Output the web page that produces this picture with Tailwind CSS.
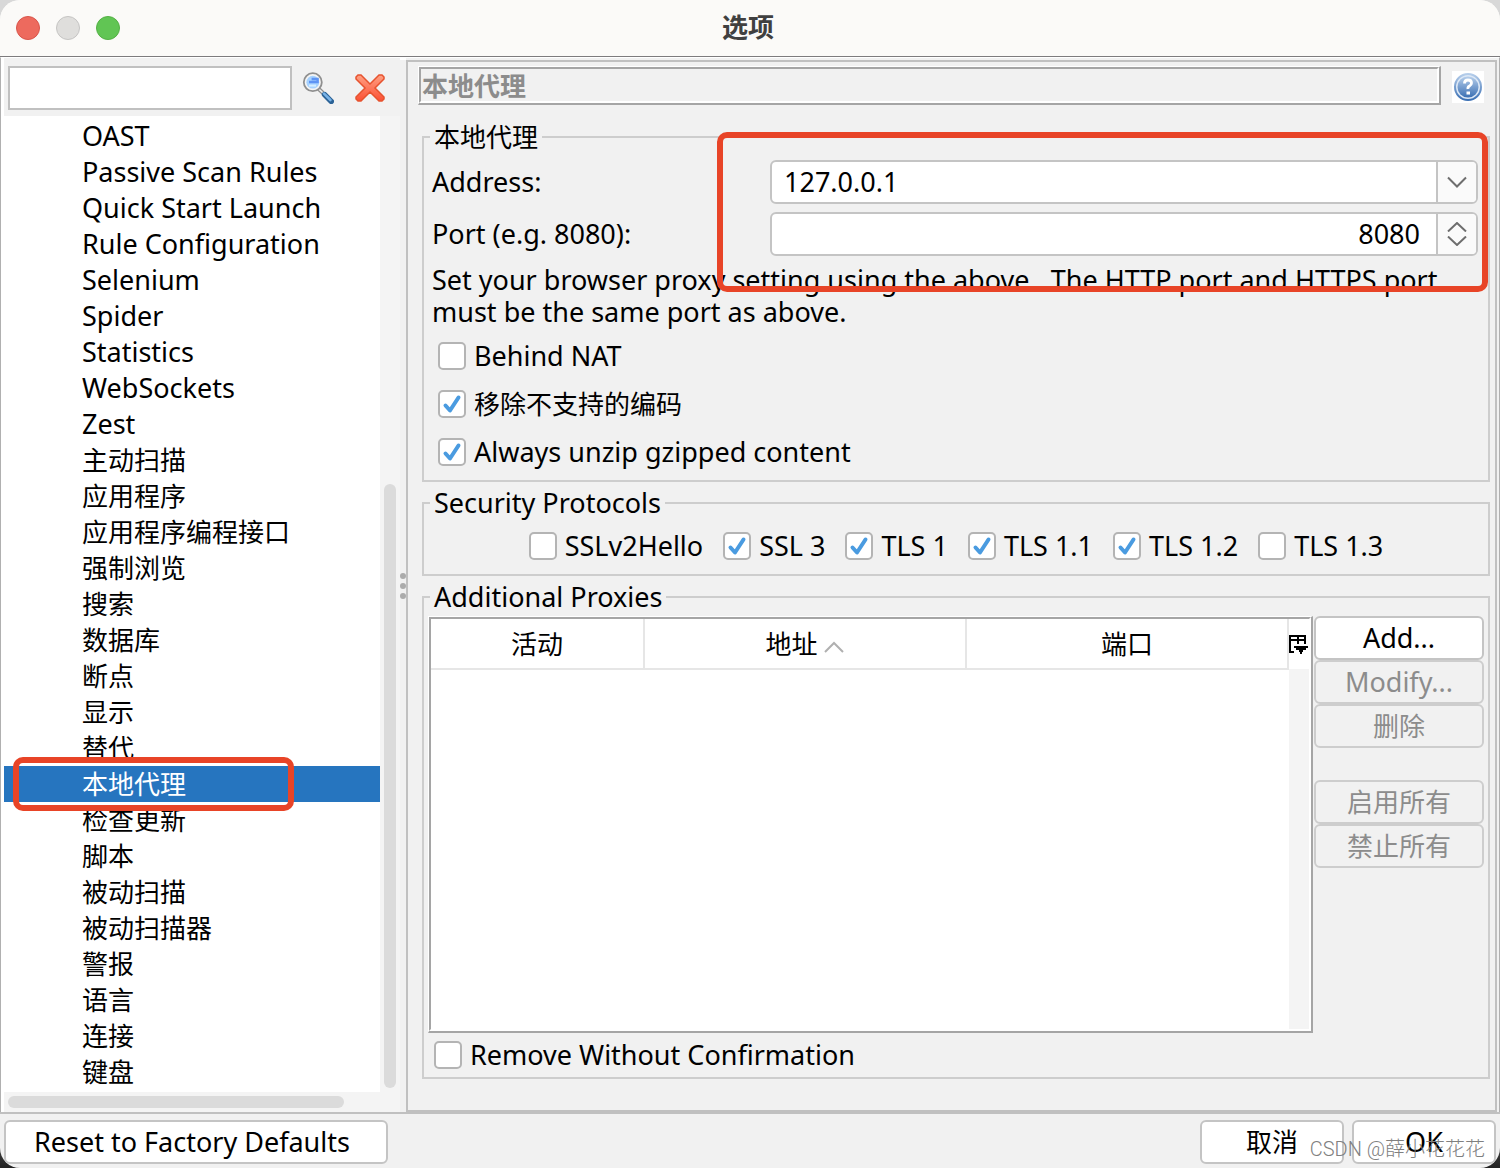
<!DOCTYPE html>
<html lang="zh-CN">
<head>
  <meta charset="UTF-8" />
  <meta name="viewport" content="width=device-width, initial-scale=1.0" />
  <title>选项</title>
  <script src="https://cdn.jsdelivr.net/npm/@tailwindcss/browser@4"></script>
</head>
<body class="bg-linear-to-b from-[#d8d8d8] from-90% to-[#222222] font-['Noto_Sans','Noto_Sans_CJK_SC',sans-serif] text-[27px] leading-8 text-black">
  <div class="relative flex min-h-screen flex-col overflow-hidden rounded-[20px] bg-[#f1f1f1]">

    <!-- Title bar -->
    <header class="relative flex h-[57px] items-center justify-center border-b border-[#7d7b7d] bg-[#fbfaf8] pb-0.5 pr-1">
      <div class="absolute left-4 top-4 flex gap-4">
        <button aria-label="关闭" class="size-6 rounded-full border border-[#d8554b] bg-[#ed6a5e]"></button>
        <button aria-label="最小化" class="size-6 rounded-full border border-[#c5c4c3] bg-[#dfdedc]"></button>
        <button aria-label="缩放" class="size-6 rounded-full border border-[#54b045] bg-[#61c554]"></button>
      </div>
      <h1 class="text-[26px] font-bold text-[#404040]">选项</h1>
    </header>

    <main class="flex flex-1 border-x border-t border-x-[#b0b0b0] border-t-white">
      <!-- Sidebar -->
      <aside class="flex w-[399px] shrink-0 flex-col border-l-3 border-white">
        <form class="flex h-[58px] items-center pl-1 pt-0.5" onsubmit="return false">
          <input id="search" type="text" aria-label="搜索" class="h-11 w-[284px] border-2 border-[#c0c0c0] bg-white px-2 outline-none" />
          <button aria-label="查找" class="ml-2.5 size-8">
            <svg viewBox="0 0 16 16" class="size-8">
              <path d="M8.400 8.500 L10.500 10.500" stroke="#8f8f8f" stroke-width="2" />
              <path d="M8.400 8.500 L10.500 10.500" stroke="#eeeeee" stroke-width="0.800" />
              <path d="M11.300 11.300 L14.600 14.700" stroke="#2b6296" stroke-width="2.800" stroke-linecap="round" />
              <path d="M11 10.800 L14.200 14" stroke="#78b2e6" stroke-width="1.300" stroke-linecap="round" />
              <circle cx="5.400" cy="5.100" r="4.500" fill="#f4f4f4" stroke="#8f8f8f" stroke-width="0.900" />
              <circle cx="5.400" cy="5.100" r="3.200" fill="#a6d2ff" />
              <path d="M3.500 5h4.300v-1.500h-3" fill="none" stroke="#5e94f4" stroke-width="1.200" />
              <path d="M3.500 6.800h3.500" stroke="#d5eeff" stroke-width="1" />
            </svg>
          </button>
          <button type="reset" aria-label="清除" class="ml-5 size-8">
            <svg viewBox="0 0 32 32" class="size-8">
              <defs>
                <linearGradient id="redX" x1="0" y1="0" x2="0" y2="1">
                  <stop offset="0" stop-color="#ffa083" />
                  <stop offset="1" stop-color="#fb5034" />
                </linearGradient>
              </defs>
              <path d="M4 3h3l9 9 9-9h3l2 2v2l-9 9 9 9v2l-2 2h-3l-9-9-9 9H4l-2-2v-2l9-9-9-9V5z" fill="url(#redX)" stroke="#e6532f" stroke-width="1.500" />
            </svg>
          </button>
        </form>
        <div class="flex flex-1">
          <ul id="menu" class="flex-1 bg-white py-0.5"></ul>
          <div class="flex w-5 flex-col bg-[#f4f4f4] px-1 pb-1">
            <div class="mt-auto h-[604px] rounded-full bg-[#dbdbdb]"></div>
          </div>
        </div>
        <div class="h-5 bg-[#f4f4f4] px-1 py-1">
          <div class="h-3 w-[336px] rounded-full bg-[#dbdbdb]"></div>
        </div>
      </aside>

      <!-- Split handle -->
      <div class="flex w-1.5 flex-col items-center justify-center gap-1 border-t-2 border-white">
        <span class="size-1.5 rounded-full bg-[#ababab]"></span>
        <span class="size-1.5 rounded-full bg-[#ababab]"></span>
        <span class="size-1.5 rounded-full bg-[#ababab]"></span>
      </div>

      <!-- Content panel -->
      <section class="mr-0.5 mt-0.5 flex min-w-0 flex-1 flex-col border-2 border-[#c0c0c0] pb-7">
        <div class="flex items-center gap-[11px] py-1 pl-2.5 pr-[11px]">
          <div class="flex-1 border-b-2 border-l border-r-2 border-t border-b-[#a5a5a5] border-l-white border-r-[#a5a5a5] border-t-white">
            <h2 class="h-9 border-2 border-b-white border-l-[#a5a5a5] border-r-white border-t-[#a5a5a5] pl-px text-[26px] font-bold leading-[34px] text-[#8c8c8c]">本地代理</h2>
          </div>
          <button aria-label="帮助" class="mt-0.5 size-8 bg-white">
            <svg viewBox="0 0 32 32" class="size-8">
              <defs>
                <linearGradient id="helpBlue" x1="0" y1="0" x2="0" y2="1">
                  <stop offset="0" stop-color="#b5cdea" />
                  <stop offset="1" stop-color="#3b70b4" />
                </linearGradient>
              </defs>
              <circle cx="16" cy="16" r="13" fill="#dbe7f5" stroke="url(#helpBlue)" stroke-width="2" />
              <circle cx="16" cy="16" r="10.500" fill="url(#helpBlue)" />
              <path d="M12.500 12.500q0-3.500 3.500-3.500t3.500 3q0 2-2 3t-1.500 3" fill="none" stroke="#fff" stroke-width="2.800" />
              <path d="M14.500 20.500h3.500v3h-3.500z" fill="#fff" />
            </svg>
          </button>
        </div>

        <div class="flex flex-1 flex-col gap-1.5 pl-3.5 pr-[5px] pt-[13px]">
          <fieldset class="relative min-w-0 border-2 border-[#cdcdcd] pb-1">
            <legend class="ml-1.5 h-[30px] px-1 text-[26px] leading-[30px]">本地代理</legend>
            <div class="mt-2 flex items-center pl-2 pr-2.5">
              <label for="address" class="w-[338px] shrink-0">Address:</label>
              <div class="relative h-11 flex-1">
                <select id="address" class="size-full appearance-none rounded-md border-2 border-[#c4c4c4] bg-white pl-3 outline-none">
                  <option>127.0.0.1</option>
                </select>
                <span class="pointer-events-none absolute inset-y-0.5 right-0.5 flex w-10 items-center justify-center rounded-r border-l-2 border-[#c4c4c4] bg-[#fafafa]">
                  <svg viewBox="0 0 20 12" class="h-3 w-5" fill="none" stroke="#6e6e6e" stroke-width="2"><path d="M1 1.500l9 9 9-9" /></svg>
                </span>
              </div>
            </div>
            <div class="mt-2 flex items-center pl-2 pr-2.5">
              <label for="port" class="w-[338px] shrink-0">Port (e.g. 8080):</label>
              <div class="flex h-11 flex-1 overflow-hidden rounded-md border-2 border-[#c4c4c4] bg-white">
                <input id="port" type="text" inputmode="numeric" value="8080" class="min-w-0 flex-1 pr-4 text-right outline-none" />
                <div class="flex w-10 flex-col items-center justify-center gap-1 border-l-2 border-[#c4c4c4] bg-[#fafafa]">
                  <button aria-label="增加" onclick="stepPort(1)" class="h-2.5 w-5">
                    <svg viewBox="0 0 20 10" class="h-2.5 w-5" fill="none" stroke="#6e6e6e" stroke-width="2"><path d="M1 9.500l9-8.500 9 8.500" /></svg>
                  </button>
                  <button aria-label="减少" onclick="stepPort(-1)" class="h-2.5 w-5">
                    <svg viewBox="0 0 20 10" class="h-2.5 w-5" fill="none" stroke="#6e6e6e" stroke-width="2"><path d="M1 0.500l9 8.500 9-8.500" /></svg>
                  </button>
                </div>
              </div>
            </div>
            <p class="mt-2 pl-2 pr-8">Set your browser proxy setting using the above.&nbsp; The HTTP port and HTTPS port must be the same port as above.</p>
            <div id="options" class="mt-1 flex flex-col pl-3.5"></div>
            <!-- Highlight around the address and port fields -->
            <div class="pointer-events-none absolute right-0 -top-5 left-[293px] h-[160px] rounded-[10px] border-6 border-[#e84427]"></div>
          </fieldset>

          <fieldset class="min-w-0 border-2 border-[#cdcdcd]">
            <legend class="ml-1.5 h-[30px] px-1 leading-[30px]">Security Protocols</legend>
            <div id="protocols" class="flex h-14 items-center justify-center gap-5"></div>
          </fieldset>

          <fieldset class="min-w-0 border-2 border-[#cdcdcd]">
            <legend class="ml-1.5 h-[30px] px-1 leading-[30px]">Additional Proxies</legend>
            <div class="mt-1 flex gap-px px-1">
              <div class="flex-1 border-b-2 border-l border-r-2 border-t border-b-[#a5a5a5] border-l-white border-r-[#a5a5a5] border-t-white">
                <div class="flex h-[414px] border-2 border-b-white border-l-[#a5a5a5] border-r-white border-t-[#a5a5a5]">
                  <div class="flex-1 bg-white">
                    <table class="w-full table-fixed border-collapse text-[26px]">
                      <thead>
                        <tr class="h-[50px]">
                          <th class="w-[213px] border-b-2 border-r-2 border-[#e6e6e6] p-0 font-normal">活动</th>
                          <th class="border-b-2 border-r-2 border-[#e6e6e6] p-0 font-normal">
                            地址
                            <svg viewBox="0 0 20 12" class="inline h-3 w-5" fill="none" stroke="#b0b0b0" stroke-width="2"><path d="M1 11l9-9 9 9" /></svg>
                          </th>
                          <th class="border-b-2 border-r-2 border-[#e6e6e6] p-0 font-normal">端口</th>
                        </tr>
                      </thead>
                      <tbody></tbody>
                    </table>
                  </div>
                  <div class="w-5 bg-[#f4f4f4]">
                    <button aria-label="列设置" class="flex h-[50px] w-5 items-center bg-white">
                      <svg viewBox="0 0 20 20" class="size-5" fill="none" stroke="#000" stroke-width="2">
                        <path d="M5 18H1V2h15v8M1 6h15M9 2v8" />
                        <path d="M5 12h14v2h-2v2h-3v2h-1v2h-2v-2h-1v-2H7v-2H5z" fill="#000" stroke="none" />
                      </svg>
                    </button>
                  </div>
                </div>
              </div>
              <div class="flex w-[170px] flex-col">
                <button class="h-11 rounded-md border-2 border-[#c4c4c4] bg-white">Add...</button>
                <button disabled class="h-11 rounded-md border-2 border-[#cdcdcd] text-[#8c8c8c]">Modify...</button>
                <button disabled class="h-11 rounded-md border-2 border-[#cdcdcd] text-[26px] text-[#8c8c8c]">删除</button>
                <button disabled class="mt-8 h-11 rounded-md border-2 border-[#cdcdcd] text-[26px] text-[#8c8c8c]">启用所有</button>
                <button disabled class="h-11 rounded-md border-2 border-[#cdcdcd] text-[26px] text-[#8c8c8c]">禁止所有</button>
              </div>
            </div>
            <div id="confirm" class="flex h-11 items-center pl-2.5"></div>
          </fieldset>
        </div>
      </section>
    </main>

    <!-- Footer -->
    <footer class="flex h-14 items-center gap-2 border-t-2 border-[#c0c0c0] px-1 pb-0.5 pt-1">
      <button class="mr-auto h-11 w-96 rounded-md border-2 border-[#c4c4c4] bg-white pr-2">Reset to Factory Defaults</button>
      <button class="h-11 w-36 rounded-md border-2 border-[#c4c4c4] bg-white text-[26px]">取消</button>
      <button class="h-11 w-36 rounded-md border-2 border-[#c4c4c4] bg-white">OK</button>
    </footer>
    <div class="pointer-events-none absolute bottom-1 right-[15px] font-[Roboto,'Noto_Sans_CJK_SC',sans-serif] text-[20px] font-light leading-[30px] text-[#808080]">CSDN @薛小花花花</div>
  </div>

  <script>
    const menuEn = ["OAST", "Passive Scan Rules", "Quick Start Launch", "Rule Configuration", "Selenium", "Spider",
      "Statistics", "WebSockets", "Zest"];
    const menuZh = ["主动扫描", "应用程序", "应用程序编程接口", "强制浏览", "搜索", "数据库", "断点", "显示", "替代",
      "本地代理", "检查更新", "脚本", "被动扫描", "被动扫描器", "警报", "语言", "连接", "键盘"];
    const current = "本地代理";

    document.getElementById("menu").innerHTML =
      menuEn.map(name => `<li><a href="#" class="block h-9 pl-[78px] leading-9">${name}</a></li>`).join("") +
      menuZh.map(name => name === current
        ? `<li class="relative bg-[#2675bf]">
            <a href="#" class="block h-9 pl-[78px] text-[26px] leading-9 text-white">${name}</a>
            <span class="pointer-events-none absolute -inset-y-[9px] left-[9px] w-[281px] rounded-[10px] border-6 border-[#e84427]"></span>
          </li>`
        : `<li><a href="#" class="block h-9 pl-[78px] text-[26px] leading-9">${name}</a></li>`).join("");

    function checkbox(id, label, checked, style) {
      return `
        <div class="flex ${style} items-center gap-2">
          <span class="relative size-7">
            <input id="${id}" type="checkbox" ${checked ? "checked" : ""} class="peer block size-7 appearance-none rounded-[5px] border-2 border-[#b4b4b4] bg-white" />
            <svg viewBox="0 0 28 28" class="pointer-events-none absolute inset-0 hidden size-7 peer-checked:block" fill="none" stroke="#4a9be0" stroke-width="4" stroke-linecap="round" stroke-linejoin="round"><path d="M7.500 15.500l4.500 5 8.500-13" /></svg>
          </span>
          <label for="${id}">${label}</label>
        </div>`;
    }

    document.getElementById("options").innerHTML =
      checkbox("nat", "Behind NAT", false, "h-12") +
      checkbox("encoding", "移除不支持的编码", true, "h-12 text-[26px]") +
      checkbox("gzip", "Always unzip gzipped content", true, "h-12");

    document.getElementById("protocols").innerHTML =
      checkbox("ssl2", "SSLv2Hello", false, "h-7") +
      checkbox("ssl3", "SSL 3", true, "h-7") +
      checkbox("tls1", "TLS 1", true, "h-7") +
      checkbox("tls11", "TLS 1.1", true, "h-7") +
      checkbox("tls12", "TLS 1.2", true, "h-7") +
      checkbox("tls13", "TLS 1.3", false, "h-7");

    document.getElementById("confirm").innerHTML =
      checkbox("remove", "Remove Without Confirmation", false, "h-7");

    function stepPort(n) {
      const port = document.getElementById("port");
      port.value = Number(port.value) + n;
    }
  </script>
</body>
</html>
